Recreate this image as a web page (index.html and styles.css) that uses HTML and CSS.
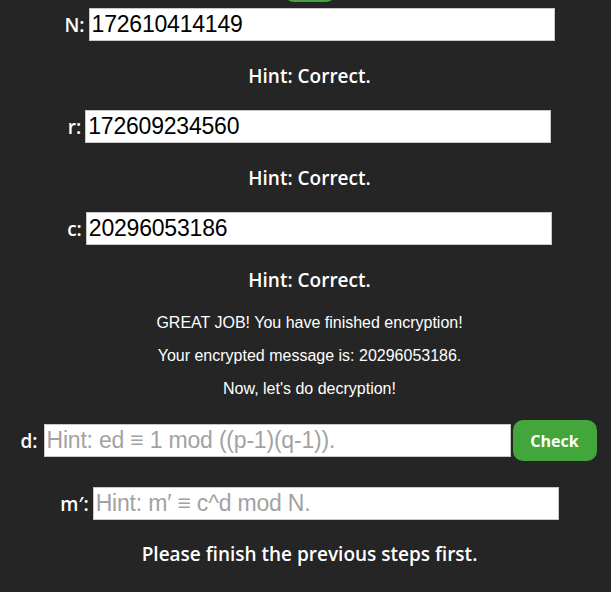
FILE: index.html
```html
<!DOCTYPE html>
<html lang="en">
<head>
<meta charset="utf-8">
<title>RSA</title>
<link rel="stylesheet" href="styles.css">
</head>
<body>
<main class="page">
  <div class="prev-btn"></div>
  <div class="field"><label class="lbl">N:</label><input class="box" type="text" value="172610414149"></div>
  <p class="hint">Hint: Correct.</p>
  <div class="field"><label class="lbl">r:</label><input class="box" type="text" value="172609234560"></div>
  <p class="hint">Hint: Correct.</p>
  <div class="field"><label class="lbl">c:</label><input class="box" type="text" value="20296053186"></div>
  <p class="hint">Hint: Correct.</p>
  <div class="summary">
    <p class="msg">GREAT JOB! You have finished encryption!</p>
    <p class="msg">Your encrypted message is: 20296053186.</p>
    <p class="msg">Now, let's do decryption!</p>
  </div>
  <div class="field field-d"><label class="lbl">d:</label><input class="box" type="text" placeholder="Hint: ed ≡ 1 mod ((p-1)(q-1))."><button class="check">Check</button></div>
  <div class="field field-m"><label class="lbl">m′:</label><input class="box" type="text" placeholder="Hint: m′ ≡ c^d mod N."></div>
  <p class="hint hint-final">Please finish the previous steps first.</p>
</main>
</body>
</html>
```
FILE: styles.css
```css
html, body {
  margin: 0;
  padding: 0;
  background: #252525;
  height: 100%;
  overflow: hidden;
}
body {
  padding-left: 8px;
  box-sizing: border-box;
  color: #ffffff;
}
.page {
  display: flex;
  flex-direction: column;
  align-items: center;
}
.prev-btn {
  width: 52px;
  height: 40px;
  margin-top: -38px;
  background: #43a63a;
  border-radius: 10px;
}
.field {
  display: flex;
  align-items: center;
  gap: 4px;
  margin-top: 22px;
}
.prev-btn + .field {
  margin-top: 6px;
}
.lbl {
  font-family: "Comic Sans MS", "Open Sans", sans-serif;
  font-weight: 600;
  font-size: 19px;
  line-height: 24px;
}
.box {
  width: 466px;
  height: 33px;
  box-sizing: border-box;
  margin: 0;
  border: 1px solid #c8c8c8;
  padding: 0 2px;
  background: #ffffff;
  color: #000000;
  font-family: "Liberation Sans", Arial, sans-serif;
  font-size: 23px;
  letter-spacing: -0.2px;
  outline: none;
}
.box::placeholder {
  color: #a2a2a2;
}
.hint {
  margin: 23px 0 0;
  font-family: "Comic Sans MS", "Open Sans", sans-serif;
  font-weight: 600;
  font-size: 19px;
  line-height: 24px;
}
.summary {
  display: flex;
  flex-direction: column;
  align-items: center;
  gap: 14px;
  margin-top: 21px;
}
.msg {
  margin: 0;
  font-family: "Liberation Sans", Arial, sans-serif;
  font-size: 16px;
  line-height: 19px;
}
.field-d {
  margin-top: 22px;
  margin-right: 2px;
  gap: 2px;
}
.field-d .lbl {
  margin-right: 4px;
}
.field-d .box {
  width: 467px;
}
.check {
  width: 84px;
  height: 41px;
  border: none;
  border-radius: 10px;
  background: #43a63a;
  color: #ffffff;
  font-family: "Comic Sans MS", "Open Sans", sans-serif;
  font-weight: 700;
  font-size: 16px;
  margin: 0;
  padding: 0;
}
.field-m {
  margin-top: 26px;
}
.hint-final {
  margin-top: 22px;
}
```
